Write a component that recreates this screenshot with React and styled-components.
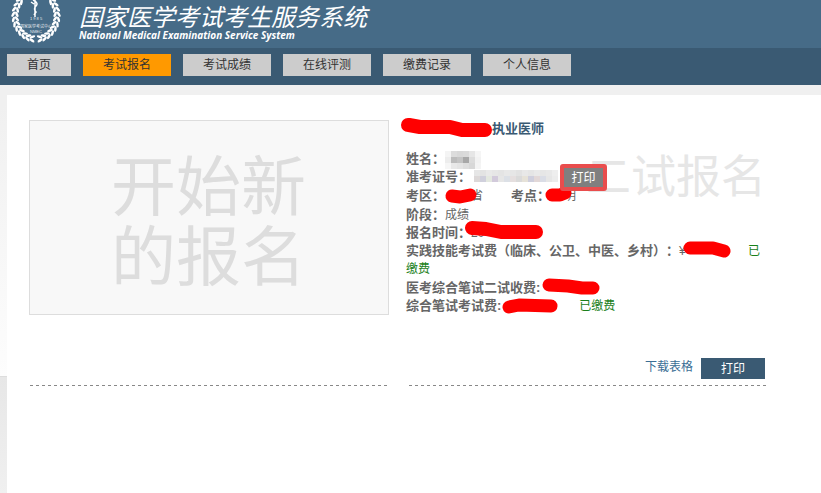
import React from "react";
import styled, { createGlobalStyle } from "styled-components";

const GlobalStyle = createGlobalStyle`
  * {
    box-sizing: border-box;
  }
  body {
    margin: 0;
    font-family: "Liberation Sans", "Noto Sans CJK SC", sans-serif;
    font-size: 12px;
    line-height: 18px;
    color: #666;
    background: #f0f0f0;
    text-spacing-trim: space-all;
  }
  a {
    text-decoration: none;
  }
  button {
    font: inherit;
    border: 0;
    padding: 0;
    cursor: pointer;
  }
`;

const Page = styled.div`
  min-height: 100vh;
  display: flex;
  flex-direction: column;
`;
const Header = styled.header`
  height: 48px;
  padding-left: 9px;
  display: flex;
  align-items: flex-start;
  gap: 16px;
  color: #fff;
  background: #466b87;
  overflow: hidden;
`;
const LogoSvg = styled.svg`
  flex: none;
  width: 54px;
  height: 44px;
`;
const Brand = styled.div`
  padding-top: 3px;
  font-style: italic;
  white-space: nowrap;
`;
const BrandTitle = styled.h1`
  margin: 0;
  font-family: "Noto Sans CJK SC", sans-serif;
  font-size: 24px;
  font-weight: 400;
  line-height: 26px;
`;
const BrandSub = styled.p`
  margin: 0;
  font-family: "Open Sans", sans-serif;
  font-size: 10px;
  font-weight: 700;
  line-height: 12px;
`;

const Nav = styled.nav`
  display: flex;
  flex-wrap: wrap;
  gap: 12px;
  padding: 6px 7px 9px;
  background: #3a5a73;
`;
const NavItem = styled.a`
  padding: 1px 20px;
  line-height: 20px;
  color: #333;
  background: ${(p) => (p.$active ? "#ff9900" : "#ccc")};
`;

const Body = styled.div`
  flex: 1;
  display: flex;
  padding: 10px 0 0 7px;
  background:
    linear-gradient(#e7e7e7, #f0f0f0) 0 292px / 100% 117px no-repeat,
    linear-gradient(#ddd, #ddd) 0 291px / 100% 1px no-repeat,
    linear-gradient(#f0f0f0, #f0f0f0 20px, #fdfdfd 291px, #f0f0f0 291px);
`;
const Content = styled.main`
  flex: 1;
  display: grid;
  grid-template-columns: minmax(0, 360px) minmax(0, 361px);
  align-content: start;
  gap: 17px;
  padding: 25px 22px;
  background: #fff;
`;
const Column = styled.section`
  position: relative;
  display: flex;
  flex-direction: column;
`;
const Divider = styled.div`
  height: 1px;
  margin: ${(p) => (p.$right ? "6px 0 0 3px" : "auto 0 0 1px")};
  background: repeating-linear-gradient(
    90deg,
    #888 0,
    #888 3px,
    transparent 3px,
    transparent 6px
  );
`;
const StartCard = styled.a`
  padding: 26px 81px 27px;
  border: 1px solid #ddd;
  font-family: "Noto Sans CJK SC", sans-serif;
  font-size: 65px;
  line-height: 70px;
  color: #ddd;
  background: #f8f8f8;
`;
const Watermark = styled.span`
  position: absolute;
  top: 22px;
  right: 1px;
  font-family: "Noto Sans CJK SC", sans-serif;
  font-size: 45px;
  line-height: 64px;
  color: #e6e6e6;
`;

const ExamTitle = styled.h2`
  position: relative;
  display: flex;
  margin: 0 0 12px;
  font-size: 13px;
  line-height: 18px;
  color: #3a5a73;
`;
const Rows = styled.div`
  position: relative;
`;
const Row = styled.div`
  position: relative;
  margin-top: ${(p) => (p.$spaced ? "1px" : "0")};
`;
const Label = styled.strong`
  font-size: 13px;
`;
const Paid = styled.span`
  color: #1a801a;
`;
const Hidden = styled.span`
  position: relative;
  display: inline-block;
  vertical-align: top;
  width: ${(p) => p.$width}px;
  height: 18px;
  text-align: ${(p) => p.$align || "left"};
`;
const Overlay = styled.svg`
  position: absolute;
  left: 0;
  top: 0;
  width: 100%;
  height: 18px;
  overflow: visible;
`;
const HighlightButton = styled.button`
  position: absolute;
  z-index: 1;
  top: -4px;
  left: 154px;
  width: 47px;
  height: 27px;
  border: 4px solid #e94d4d;
  border-radius: 3px;
  color: #fff;
  background: #7f7f7f;
`;
const Actions = styled.div`
  display: flex;
  justify-content: flex-end;
  align-items: flex-start;
  gap: 8px;
  margin-top: 43px;
  padding-right: 2px;
`;
const DownloadLink = styled.a`
  color: #3b6e95;
`;
const PrintButton = styled.button`
  width: 64px;
  height: 21px;
  color: #fff;
  background: #3a5a73;
`;

const navItems = [
  "首页",
  "考试报名",
  "考试成绩",
  "在线评测",
  "缴费记录",
  "个人信息",
];

const leafAngles = [98, 110, 122, 134, 146, 158, 170, 182, 194, 206, 218];

function Leaves() {
  return leafAngles.map((deg) => {
    const rad = (deg * Math.PI) / 180;
    const x = 27 + 21 * Math.cos(rad);
    const y = 16 + 23 * Math.sin(rad);
    return (
      <g key={deg} transform={`translate(${x} ${y}) rotate(${deg + 90})`}>
        <ellipse cx="0" cy="-2" rx="3" ry="1.3" transform="rotate(28)" />
        <ellipse cx="0" cy="2" rx="3" ry="1.3" transform="rotate(-28)" />
      </g>
    );
  });
}

function Logo() {
  return (
    <LogoSvg viewBox="0 0 54 44" fill="#fff" aria-hidden="true">
      <Leaves />
      <g transform="translate(54 0) scale(-1 1)">
        <Leaves />
      </g>
      <path
        d="M26 0v17M24 0q6 3 3 6t0 6l-2 3M22 2l3 2"
        fill="none"
        stroke="#fff"
        strokeWidth="1.5"
      />
      <g fontSize="4" textAnchor="middle" opacity="0.85">
        <text x="27" y="20">1 9 8 5</text>
        <text x="27" y="28">国家医学考试中心</text>
        <text x="27" y="33">NMEC</text>
      </g>
    </LogoSvg>
  );
}

function Scribble({ width, align, d, size = 13, children }) {
  return (
    <Hidden $width={width} $align={align}>
      {children}
      <Overlay aria-hidden="true">
        <path
          d={d}
          fill="none"
          stroke="#f00"
          strokeWidth={size}
          strokeLinecap="round"
          strokeLinejoin="round"
        />
      </Overlay>
    </Hidden>
  );
}

function Mosaic({ width, colors, cell, x = 0, y = 0, perRow }) {
  return (
    <Hidden $width={width}>
      <Overlay aria-hidden="true">
        {colors.map((fill, i) => (
          <rect
            key={i}
            x={x + (i % perRow) * cell}
            y={y + Math.floor(i / perRow) * cell}
            width={cell}
            height={cell}
            fill={fill}
          />
        ))}
      </Overlay>
    </Hidden>
  );
}

const nameColors = [
  "#f4f4f4", "#dcdcdc", "#d8d8d8", "#dadada", "#e6e6e6", "#f5f5f5",
  "#ededed", "#bcbcbc", "#c4c4c4", "#a8a8a8", "#dcdcdc", "#f2f2f2",
  "#f6f6f6", "#e8e8e8", "#e4e4e4", "#dedede", "#d8d8d8", "#f4f4f4",
];
const ticketColors = [
  "#e6e6e6", "#e3e3e3", "#e9e9e9", "#e6e6e6", "#e4e4e4", "#e8e8e8", "#e6e6e6",
  "#e2e2e2", "#e8e8e8", "#e5e5e5", "#e9e9e9", "#e6e6e6", "#e8e8e8", "#eee",
  "#dcd8d8", "#d0d0dc", "#e4e8e0", "#d2cadb", "#e6e6e6", "#dce0e6", "#e5dfdf",
  "#dadada", "#e6e2d8", "#cfcfdd", "#e2d8d8", "#dadde6", "#e6e6e6", "#ececec",
];

export default function App() {
  return (
    <>
      <GlobalStyle />
      <Page>
        <Header>
          <Logo />
          <Brand>
            <BrandTitle>国家医学考试考生服务系统</BrandTitle>
            <BrandSub>National Medical Examination Service System</BrandSub>
          </Brand>
        </Header>
        <Nav>
          {navItems.map((item) => (
            <NavItem key={item} href="#" $active={item === "考试报名"}>
              {item}
            </NavItem>
          ))}
        </Nav>
        <Body>
          <Content>
            <Column>
              <StartCard href="#">
                开始新
                <br />
                的报名
              </StartCard>
              <Divider />
            </Column>
            <Column>
              <Watermark>二试报名</Watermark>
              <ExamTitle>
                <Scribble width={86} d="M2 5H3L14 7H44L56 10H79" size={14} />
                执业医师
              </ExamTitle>
              <Rows>
                <Row>
                  <Label>姓名：</Label>
                  <Mosaic
                    width={38}
                    colors={nameColors}
                    cell={6}
                    perRow={6}
                    y={1}
                  />
                </Row>
                <Row>
                  <Label>准考证号：</Label>
                  <Mosaic
                    width={86}
                    colors={ticketColors}
                    cell={6}
                    perRow={14}
                    x={3}
                    y={2}
                  />
                  <HighlightButton type="button">打印</HighlightButton>
                </Row>
                <Row $spaced>
                  <Label>考区：</Label>
                  <Scribble width={38} align="right" d="M7 9L15 10L25 8">
                    省
                  </Scribble>
                  <Hidden $width={28} />
                  <Label>考点：</Label>
                  <Scribble width={26} align="right" d="M2 8L10 8L15 6">
                    明
                  </Scribble>
                </Row>
                <Row $spaced>
                  <Label>阶段：</Label>
                  成绩
                </Row>
                <Row>
                  <Label>报名时间：</Label>
                  <Scribble width={70} d="M1 4L15 5L30 8H65" size={14}>
                    20
                  </Scribble>
                </Row>
                <Row>
                  <Label>实践技能考试费（临床、公卫、中医、乡村）：</Label>
                  <Scribble width={69} d="M11 6L34 6L45 9">
                    ¥
                  </Scribble>
                  <Paid>已缴费</Paid>
                </Row>
                <Row $spaced>
                  <Label>医考综合笔试二试收费:</Label>
                  <Scribble width={62} d="M9 6L28 7L42 9H53" />
                </Row>
                <Row>
                  <Label>综合笔试考试费:</Label>
                  <Scribble width={78} d="M8 10L18 8L50 9" />
                  <Paid>已缴费</Paid>
                </Row>
              </Rows>
              <Actions>
                <DownloadLink href="#">下载表格</DownloadLink>
                <PrintButton type="button">打印</PrintButton>
              </Actions>
              <Divider $right />
            </Column>
          </Content>
        </Body>
      </Page>
    </>
  );
}
